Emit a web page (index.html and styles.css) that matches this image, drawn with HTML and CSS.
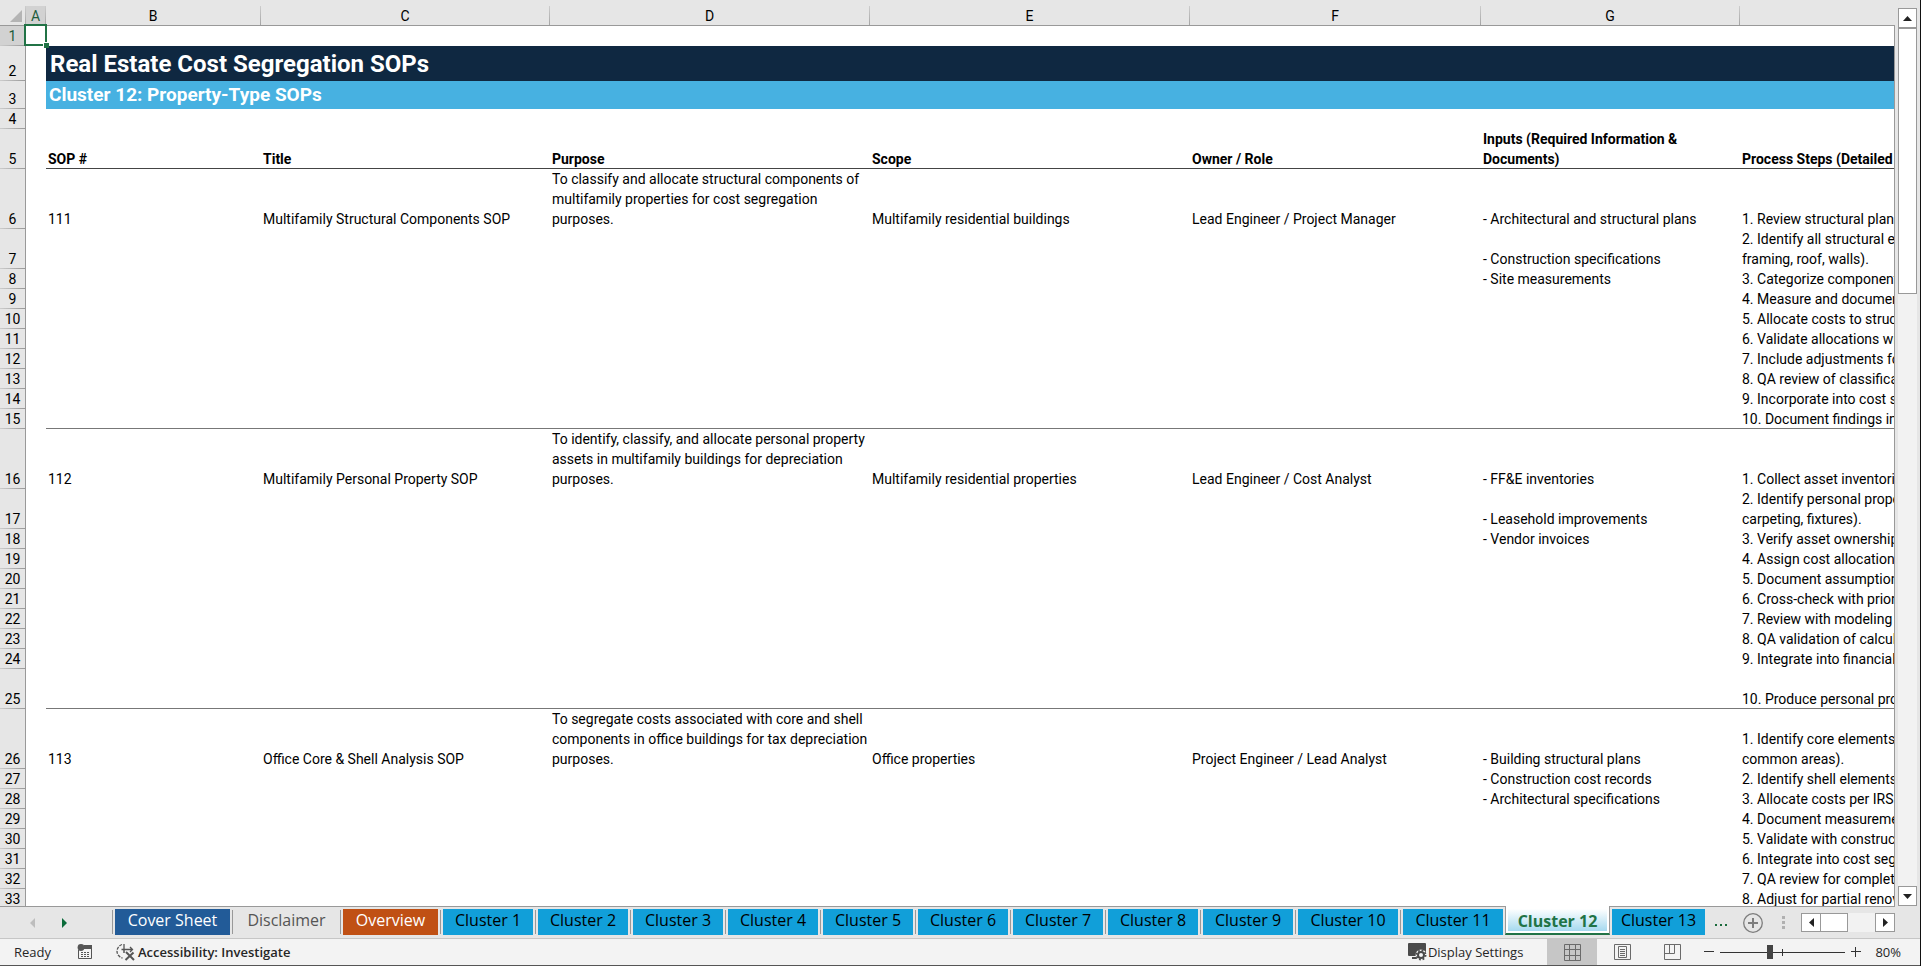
FILE: index.html
```
<!DOCTYPE html>
<html lang="en">
<head>
<meta charset="utf-8">
<title>Real Estate Cost Segregation SOPs</title>
<link rel="stylesheet" href="styles.css">
</head>
<body>
<main class="workspace">
  <div class="sheet">
    <table class="grid">
      <colgroup>
        <col class="col-num"><col class="col-a"><col class="col-b"><col class="col-c"><col class="col-d"><col class="col-e"><col class="col-f"><col class="col-g"><col>
      </colgroup>
      <thead>
        <tr>
          <th class="corner" aria-label="Select all"><svg width="12" height="12" viewBox="0 0 12 12"><path d="M12 0v12H0z" fill="#b4b4b4"/></svg></th>
          <th class="active"><span>A</span></th><th><span>B</span></th><th><span>C</span></th><th><span>D</span></th><th><span>E</span></th><th><span>F</span></th><th><span>G</span></th><th class="last"></th>
        </tr>
      </thead>
      <tbody>
        <tr><th class="active">1</th><td class="selected"><i class="handle"></i></td><td></td><td></td><td></td><td></td><td></td><td></td><td></td></tr>
        <tr class="title"><th>2</th><td></td><td class="band" colspan="7">Real Estate Cost Segregation SOPs</td></tr>
        <tr class="subtitle"><th>3</th><td></td><td class="band" colspan="7">Cluster 12: Property-Type SOPs</td></tr>
        <tr><th>4</th><td></td><td></td><td></td><td></td><td></td><td></td><td></td><td></td></tr>
        <tr class="x2 heads ruled"><th>5</th><td></td><td>SOP #</td><td>Title</td><td>Purpose</td><td>Scope</td><td>Owner / Role</td><td>Inputs (Required Information &amp; Documents)</td><td>Process Steps (Detailed</td></tr>
        <tr class="x3"><th>6</th><td></td><td>111</td><td>Multifamily Structural Components SOP</td><td>To classify and allocate structural components of multifamily properties for cost segregation purposes.</td><td>Multifamily residential buildings</td><td>Lead Engineer / Project Manager</td><td>- Architectural and structural plans</td><td>1. Review structural plans</td></tr>
        <tr class="x2"><th>7</th><td></td><td></td><td></td><td></td><td></td><td></td><td>- Construction specifications</td><td>2. Identify all structural elements<br>framing, roof, walls).</td></tr>
        <tr><th>8</th><td></td><td></td><td></td><td></td><td></td><td></td><td>- Site measurements</td><td>3. Categorize components</td></tr>
        <tr><th>9</th><td></td><td></td><td></td><td></td><td></td><td></td><td></td><td>4. Measure and document</td></tr>
        <tr><th>10</th><td></td><td></td><td></td><td></td><td></td><td></td><td></td><td>5. Allocate costs to structural</td></tr>
        <tr><th>11</th><td></td><td></td><td></td><td></td><td></td><td></td><td></td><td>6. Validate allocations with</td></tr>
        <tr><th>12</th><td></td><td></td><td></td><td></td><td></td><td></td><td></td><td>7. Include adjustments for</td></tr>
        <tr><th>13</th><td></td><td></td><td></td><td></td><td></td><td></td><td></td><td>8. QA review of classification</td></tr>
        <tr><th>14</th><td></td><td></td><td></td><td></td><td></td><td></td><td></td><td>9. Incorporate into cost segregation</td></tr>
        <tr class="ruled"><th>15</th><td></td><td></td><td></td><td></td><td></td><td></td><td></td><td>10. Document findings in</td></tr>
        <tr class="x3"><th>16</th><td></td><td>112</td><td>Multifamily Personal Property SOP</td><td>To identify, classify, and allocate personal property assets in multifamily buildings for depreciation purposes.</td><td>Multifamily residential properties</td><td>Lead Engineer / Cost Analyst</td><td>- FF&amp;E inventories</td><td>1. Collect asset inventories</td></tr>
        <tr class="x2"><th>17</th><td></td><td></td><td></td><td></td><td></td><td></td><td>- Leasehold improvements</td><td>2. Identify personal property<br>carpeting, fixtures).</td></tr>
        <tr><th>18</th><td></td><td></td><td></td><td></td><td></td><td></td><td>- Vendor invoices</td><td>3. Verify asset ownership</td></tr>
        <tr><th>19</th><td></td><td></td><td></td><td></td><td></td><td></td><td></td><td>4. Assign cost allocation</td></tr>
        <tr><th>20</th><td></td><td></td><td></td><td></td><td></td><td></td><td></td><td>5. Document assumptions</td></tr>
        <tr><th>21</th><td></td><td></td><td></td><td></td><td></td><td></td><td></td><td>6. Cross-check with prior</td></tr>
        <tr><th>22</th><td></td><td></td><td></td><td></td><td></td><td></td><td></td><td>7. Review with modeling team</td></tr>
        <tr><th>23</th><td></td><td></td><td></td><td></td><td></td><td></td><td></td><td>8. QA validation of calculations</td></tr>
        <tr><th>24</th><td></td><td></td><td></td><td></td><td></td><td></td><td></td><td>9. Integrate into financial</td></tr>
        <tr class="x2 ruled"><th>25</th><td></td><td></td><td></td><td></td><td></td><td></td><td></td><td>10. Produce personal property</td></tr>
        <tr class="x3"><th>26</th><td></td><td>113</td><td>Office Core &amp; Shell Analysis SOP</td><td>To segregate costs associated with core and shell components in office buildings for tax depreciation purposes.</td><td>Office properties</td><td>Project Engineer / Lead Analyst</td><td>- Building structural plans</td><td>1. Identify core elements (lobbies,<br>common areas).</td></tr>
        <tr><th>27</th><td></td><td></td><td></td><td></td><td></td><td></td><td>- Construction cost records</td><td>2. Identify shell elements</td></tr>
        <tr><th>28</th><td></td><td></td><td></td><td></td><td></td><td></td><td>- Architectural specifications</td><td>3. Allocate costs per IRS and</td></tr>
        <tr><th>29</th><td></td><td></td><td></td><td></td><td></td><td></td><td></td><td>4. Document measurements</td></tr>
        <tr><th>30</th><td></td><td></td><td></td><td></td><td></td><td></td><td></td><td>5. Validate with construction</td></tr>
        <tr><th>31</th><td></td><td></td><td></td><td></td><td></td><td></td><td></td><td>6. Integrate into cost segregation</td></tr>
        <tr><th>32</th><td></td><td></td><td></td><td></td><td></td><td></td><td></td><td>7. QA review for completeness</td></tr>
        <tr><th>33</th><td></td><td></td><td></td><td></td><td></td><td></td><td></td><td>8. Adjust for partial renovations</td></tr>
      </tbody>
    </table>
  </div>
  <div class="vscroll">
    <button class="arrow" aria-label="Scroll up"><svg width="9" height="5" viewBox="0 0 9 5"><path d="M4.500 0 9 5H0z" fill="#222"/></svg></button>
    <div class="track"><div class="thumb"></div></div>
    <button class="arrow" aria-label="Scroll down"><svg width="9" height="5" viewBox="0 0 9 5"><path d="M0 0h9L4.500 5z" fill="#222"/></svg></button>
  </div>
</main>

<nav class="tabbar" aria-label="Sheets">
  <div class="tabnav">
    <button aria-label="Previous sheet"><svg width="5" height="10" viewBox="0 0 5 10"><path d="M5 0v10L0 5z" fill="#bdbdbd"/></svg></button>
    <button aria-label="Next sheet"><svg width="5" height="10" viewBox="0 0 5 10"><path d="M0 0v10l5-5z" fill="#0b6b3a"/></svg></button>
  </div>
  <div class="tabs">
    <div class="slot"><button class="tab cover">Cover Sheet</button></div>
    <div class="slot"><button class="tab plain">Disclaimer</button></div>
    <div class="slot"><button class="tab overview">Overview</button></div>
    <div class="slot"><button class="tab">Cluster 1</button></div>
    <div class="slot"><button class="tab">Cluster 2</button></div>
    <div class="slot"><button class="tab">Cluster 3</button></div>
    <div class="slot"><button class="tab">Cluster 4</button></div>
    <div class="slot"><button class="tab">Cluster 5</button></div>
    <div class="slot"><button class="tab">Cluster 6</button></div>
    <div class="slot"><button class="tab">Cluster 7</button></div>
    <div class="slot"><button class="tab">Cluster 8</button></div>
    <div class="slot"><button class="tab">Cluster 9</button></div>
    <div class="slot"><button class="tab wide">Cluster 10</button></div>
    <div class="slot"><button class="tab wide">Cluster 11</button></div>
    <button class="current">Cluster 12</button>
    <div class="slot bare"><button class="tab cut">Cluster 13</button></div>
  </div>
  <button class="more" aria-label="More sheets"><svg width="14" height="4" viewBox="0 0 14 4" fill="#1a6b3c"><path d="M1 1h2v2H1zM6 1h2v2H6zM11 1h2v2h-2z"/></svg></button>
  <button class="add" aria-label="New sheet"><svg width="20" height="20" viewBox="0 0 20 20" fill="none" stroke="#7d7d7d"><circle cx="10" cy="10" r="9.300" stroke-width="1.300"/><path d="M10 5v10M5 10h10" stroke-width="2"/></svg></button>
  <svg class="grip" width="3" height="13" viewBox="0 0 3 13" fill="#b0b0b0"><path d="M0 0h3v3H0zM0 5h3v3H0zM0 10h3v3H0z"/></svg>
  <div class="hscroll">
    <button class="arrow" aria-label="Scroll left"><svg width="5" height="9" viewBox="0 0 5 9"><path d="M5 0v9L0 4.500z" fill="#222"/></svg></button>
    <div class="hthumb"></div>
    <div class="htrack"></div>
    <button class="arrow" aria-label="Scroll right"><svg width="5" height="9" viewBox="0 0 5 9"><path d="M0 0v9l5-4.500z" fill="#222"/></svg></button>
  </div>
</nav>

<footer class="status">
  <span class="ready">Ready</span>
  <button class="macro" aria-label="Record macro"><svg width="16" height="16" viewBox="0 0 16 16"><path d="M1.500 6v8.500h13V1.500H7" fill="none" stroke="#555"/><path d="M7 1h8v4H7z" fill="#555"/><circle cx="4" cy="3.500" r="3.400" fill="#555"/><path d="M4 8.500h9M4 10.500h9M4 12.500h9" stroke="#555" stroke-dasharray="2 1"/></svg></button>
  <button class="access"><svg width="19" height="18" viewBox="0 0 19 18" fill="none" stroke="#555"><path d="M6 1.500A7.500 7.500 0 0 0 1 8a7 7 0 0 0 5.500 7" stroke-width="1.300" stroke-dasharray="3 1.200"/><path d="M8 1v5M5.500 6.500h11M14 4l2.500 2.500L14 9" stroke-width="1.300"/><path d="M8 6v4" stroke-width="1.500"/><path d="m10 9 8 8M17.500 9.500l-8 7.500" stroke-width="2"/></svg>Accessibility: Investigate</button>
  <button class="display"><svg width="19" height="18" viewBox="0 0 19 18"><path d="M1 0h16a1 1 0 0 1 1 1v8H9v4H1a1 1 0 0 1-1-1V1a1 1 0 0 1 1-1zM4 14h5v2H4z" fill="#4a4a4a"/><circle cx="13" cy="12" r="5.500" fill="#f3f3f3"/><circle cx="13" cy="12" r="3" fill="none" stroke="#4a4a4a" stroke-width="2"/><circle cx="13" cy="12" r="4.600" fill="none" stroke="#4a4a4a" stroke-width="1.800" stroke-dasharray="1.800 1.810"/></svg>Display Settings</button>
  <div class="views">
    <button class="view on" aria-label="Normal view"><svg width="17" height="17" viewBox="0 0 17 17" fill="none" stroke="#6a6a6a"><path d="M.5.500h16v16H.5zM5.500.500v16M11.500.500v16M.5 5.500h16M.5 11.500h16"/></svg></button>
    <button class="view" aria-label="Page layout"><svg width="17" height="16" viewBox="0 0 17 16" fill="none" stroke="#6a6a6a"><path d="M.5.500h16v15H.5zM4.500 2.500h8v11h-8zM6 5.500h5M6 7.500h5M6 9.500h5M6 11.500h5"/></svg></button>
    <button class="view" aria-label="Page break preview"><svg width="17" height="16" viewBox="0 0 17 16" fill="none" stroke="#6a6a6a"><path d="M.5.500h16v15H.5zM5.500.500v9M10.500.500v9M.5 9.500h10"/></svg></button>
  </div>
  <button class="step" aria-label="Zoom out"><svg width="10" height="10" viewBox="0 0 10 10"><path d="M0 4.500h10" stroke="#333"/></svg></button>
  <input class="zoom" type="range" min="0" max="100" value="39" aria-label="Zoom">
  <button class="step" aria-label="Zoom in"><svg width="10" height="10" viewBox="0 0 10 10"><path d="M0 4.500h10M4.500 0v10" stroke="#333"/></svg></button>
  <button class="percent">80%</button>
</footer>
</body>
</html>
```
FILE: styles.css
```
* { box-sizing: border-box; }

body {
  margin: 0;
  height: 100vh;
  display: flex;
  flex-direction: column;
  overflow: hidden;
  background: #e6e6e6;
  border-right: 1px solid #111;
  font-family: Roboto, "Liberation Sans", sans-serif;
  font-size: 14px;
  line-height: 20px;
  color: #000;
}

button {
  margin: 0;
  padding: 0;
  border: 0;
  background: none;
  font: inherit;
  color: inherit;
  display: flex;
  align-items: center;
  justify-content: center;
}

svg { display: block; flex: none; }

/* Sheet */
.workspace { flex: 1; min-height: 0; display: flex; }
.sheet { flex: 1; min-width: 0; overflow: hidden; }

.grid {
  width: 100%;
  table-layout: fixed;
  border-collapse: separate;
  border-spacing: 0;
}
.col-num { width: 26px; }
.col-a { width: 20px; }
.col-b { width: 215px; }
.col-c { width: 289px; }
.col-d, .col-e { width: 320px; }
.col-f { width: 291px; }
.col-g { width: 259px; }

.grid th { font-weight: 400; padding: 0; }
.grid thead th {
  height: 26px;
  padding-top: 6px;
  vertical-align: bottom;
  border-bottom: 1px solid #999;
  background: linear-gradient(#ccc, #999) right 6px / 1px 100% no-repeat;
}
.grid thead th span { display: block; padding-top: 2px; line-height: 17px; margin-right: 1px; }
.grid thead th.last { background: none; }
.grid thead .active span { background: #d2d2d2; color: #1e5c3c; }
.grid .corner svg { margin: 0 0 3px 10px; }

.grid tbody th {
  height: 20px;
  vertical-align: bottom;
  border-right: 1px solid #999;
  background: linear-gradient(to right, #ccc, #999) bottom / 100% 1px no-repeat #e6e6e6;
}
.grid tbody th.active { background-color: #d2d2d2; color: #1e5c3c; }

.grid td {
  padding: 0 2px;
  vertical-align: bottom;
  background: #fff;
}
.grid td:last-child {
  border-right: 1px solid #999;
  overflow: hidden;
  white-space: nowrap;
}
.x2 th { height: 40px !important; }
.x3 th { height: 60px !important; }
.ruled td:nth-child(n+3) {
  background: linear-gradient(#777, #777) bottom / 100% 1px no-repeat #fff;
}
.heads td:nth-child(n+3) {
  font-weight: 700;
  background: linear-gradient(#444, #444) bottom / 100% 1px no-repeat #fff;
}

.title th { height: 35px !important; }
.title .band {
  background: #0f2841;
  color: #fff;
  font-size: 24px;
  line-height: 34px;
  font-weight: 700;
  padding-left: 4px;
}
.subtitle th { height: 28px !important; }
.subtitle .band {
  background: #47b1e1;
  color: #fff;
  font-size: 19px;
  line-height: 28px;
  font-weight: 700;
  padding-left: 3px;
}

.selected { position: relative; }
.selected::before {
  content: "";
  position: absolute;
  inset: -2px -1px 0 -2px;
  border: 2px solid #217346;
}
.handle {
  position: absolute;
  right: -3px;
  bottom: -2px;
  width: 6px;
  height: 6px;
  background: #217346;
  border: solid #fff;
  border-width: 1px 0 0 1px;
}

/* Scroll bars */
.arrow {
  width: 19px;
  height: 20px;
  flex: none;
  background: #fff;
  border: 1px solid #999;
}
.vscroll {
  width: 25px;
  padding: 8px 3px 0;
  display: flex;
  flex-direction: column;
}
.vscroll .track { flex: 1; background: #f2f2f2; }
.vscroll .thumb { height: 31%; background: #fff; border: 1px solid #999; }

/* Sheet tabs */
.tabbar {
  height: 33px;
  flex: none;
  display: flex;
  align-items: flex-start;
  background: linear-gradient(#999, #999) 0 0 / calc(100% - 25px) 1px no-repeat;
  border-bottom: 1px solid #c6c6c6;
  padding-right: 25px;
  font-family: "Open Sans", "Liberation Sans", sans-serif;
  font-size: 16px;
  line-height: 22px;
}
.tabnav { width: 112px; height: 32px; display: flex; align-items: center; padding: 1px 0 0 30px; gap: 27px; }
.tabs { display: flex; align-items: flex-start; }
.slot {
  padding: 3px 2px 0;
  height: 29px;
  background: linear-gradient(#999, #999) left 4px / 1px 24px no-repeat;
  padding-left: 3px;
}
.slot.bare { background: none; padding-left: 2px; }
.tab {
  width: 90px;
  height: 26px;
  padding-bottom: 4px;
  background: #119fd9;
  white-space: nowrap;
}
.tab.wide { width: 100px; }
.tab.cover { width: 115px; background: #225b98; color: #fff; }
.tab.plain { width: 103px; background: none; color: #555; }
.tab.overview { width: 95px; background: #c05014; color: #fff; }
.tab.cut { width: 93px; }
.current {
  width: 105px;
  height: 29px;
  padding: 2px 0 0;
  border: 1px solid #999;
  border-top: 0;
  border-bottom: 2px solid #217346;
  background: linear-gradient(#fff 10%, #9dd6ee) 0 0 / 100% 100% no-repeat;
  box-shadow: inset 2px 0 #fff, inset -2px 0 #fff, inset 0 -2px #fff;
  color: #217346;
  font-weight: 700;
  white-space: nowrap;
}
.more { margin-left: 7px; height: 32px; padding-top: 5px; }
.add { margin-left: 15px; height: 32px; padding-top: 1px; }
.grip { margin: 10px 16px 0 auto; }
.hscroll { display: flex; margin-top: 7px; }
.hscroll .arrow { height: 19px; width: 20px; }
.hthumb { width: 27px; background: #fff; border: 1px solid #999; border-left: 0; }
.htrack { width: 27px; background: #f2f2f2; }

/* Status bar */
.status {
  height: 27px;
  flex: none;
  display: flex;
  align-items: center;
  background: #f3f3f3;
  border-bottom: 1px solid #555;
  padding: 0 19px 0 14px;
  font-family: "Open Sans", "Liberation Sans", sans-serif;
  font-size: 13px;
  color: #262626;
}
.macro { margin-left: 26px; }
.access { margin-left: 23px; gap: 3px; font-weight: 600; }
.display { margin-left: auto; gap: 1px; }
.views { display: flex; align-self: stretch; margin: 0 7px 0 24px; }
.view { width: 50px; }
.view.on { background: #c6c6c6; }
.percent { margin-left: 14px; }
.zoom {
  appearance: none;
  width: 125px;
  height: 14px;
  margin: 0 6px;
  background:
    linear-gradient(#333, #333) center / 100% 1px no-repeat,
    linear-gradient(#333, #333) center / 1px 7px no-repeat;
}
.zoom::-webkit-slider-thumb {
  appearance: none;
  width: 6px;
  height: 14px;
  background: #444;
}
```
